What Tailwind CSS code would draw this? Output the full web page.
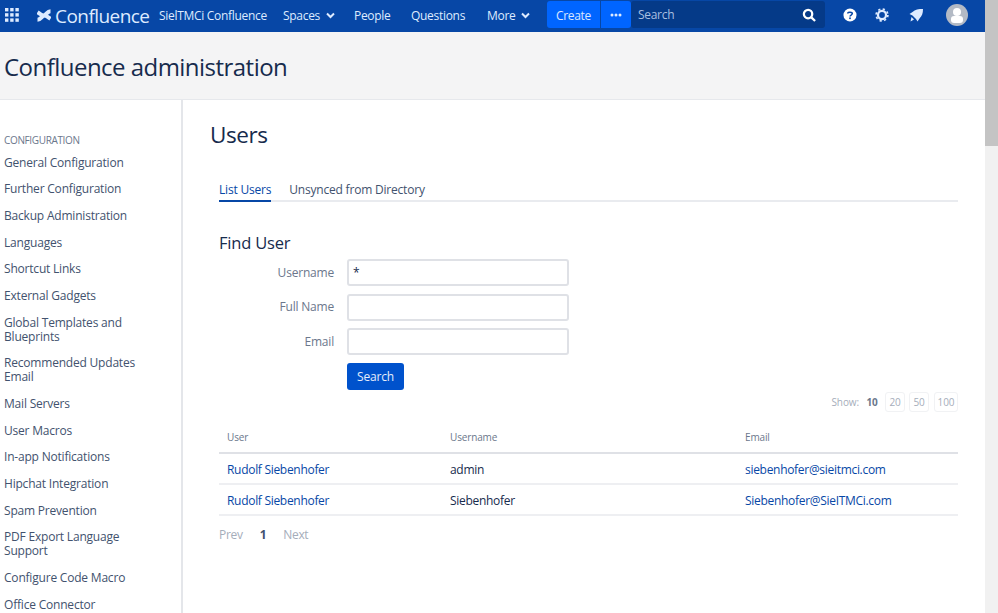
<!DOCTYPE html>
<html><head><meta charset="utf-8"><script src="https://cdn.jsdelivr.net/npm/@tailwindcss/browser@4"></script></head>
<body class="m-0 w-[998px] h-[613px] overflow-hidden bg-white font-['Open_Sans','Noto_Sans',sans-serif] text-[#172b4d] flex">
<div class="w-[985px] h-[613px] flex flex-col shrink-0 overflow-hidden">
<header class="h-8 shrink-0 bg-[#0747a6] flex items-center text-[#deebff] text-[12px] tracking-[-0.3px]">
  <svg class="ml-[5px] -mt-[2px] w-[14px] h-[14px]" viewBox="0 0 14 14" fill="#deebff"><rect x="0" y="0" width="3.4" height="3.4"/><rect x="5.2" y="0" width="3.4" height="3.4"/><rect x="10.4" y="0" width="3.4" height="3.4"/><rect x="0" y="5.2" width="3.4" height="3.4"/><rect x="5.2" y="5.2" width="3.4" height="3.4"/><rect x="10.4" y="5.2" width="3.4" height="3.4"/><rect x="0" y="10.4" width="3.4" height="3.4"/><rect x="5.2" y="10.4" width="3.4" height="3.4"/><rect x="10.4" y="10.4" width="3.4" height="3.4"/></svg>
  <svg class="ml-[18px] -mt-[2px] w-[14px] h-[13px]" viewBox="0 0 14 13" fill="none" stroke="#deebff" stroke-width="4"><path d="M0.500 10.800C4 10.800 5 6.500 7.500 6.500C9.500 6.500 11 8 13.500 9.800"/><path d="M13.500 2.200C10 2.200 9 6.500 6.500 6.500C4.500 6.500 3 5 0.500 3.200"/></svg>
  <span class="ml-[4px] text-[19px] leading-none tracking-[-0.55px] text-[#deebff] w-[95px] whitespace-nowrap">Confluence</span>
  <span class="ml-[9px] w-[124px] whitespace-nowrap">SielTMCi Confluence</span>
  <span class="flex items-center w-[71px]">Spaces<svg class="ml-[6px] -mt-[2px] w-[9px] h-[7px]" viewBox="0 0 9 7" fill="none" stroke="#deebff" stroke-width="2"><path d="M1 1.500L4.500 5L8 1.500"/></svg></span>
  <span class="w-[57px]">People</span>
  <span class="w-[76px]">Questions</span>
  <span class="flex items-center w-[60px]">More<svg class="ml-[6px] -mt-[2px] w-[9px] h-[7px]" viewBox="0 0 9 7" fill="none" stroke="#deebff" stroke-width="2"><path d="M1 1.500L4.500 5L8 1.500"/></svg></span>
  <div class="h-[27px] self-start mt-px flex items-stretch">
    <span class="w-[53px] bg-[#0065ff] rounded-l-[3px] flex items-center justify-center text-white/85 pt-[2px]">Create</span>
    <span class="w-[30px] ml-px bg-[#0065ff] rounded-r-[3px] flex items-center justify-center"><svg class="w-3 h-[4px]" viewBox="0 0 12 4" fill="#deebff"><circle cx="2" cy="2" r="1.500"/><circle cx="6" cy="2" r="1.500"/><circle cx="10" cy="2" r="1.500"/></svg></span>
    <div class="w-[194px] bg-[#053a88] rounded-[3px] flex items-center justify-between pl-[7px] pr-[9px] text-[#a9bfe0]">Search<svg class="w-[14px] h-[14px]" viewBox="0 0 15 15" fill="none" stroke="#fff" stroke-width="2.400"><circle cx="6.500" cy="6.500" r="4.500"/><path d="M10 10L14 14"/></svg></div>
  </div>
  <svg class="ml-[18px] -mt-[2px] w-[14px] h-[14px]" viewBox="0 0 15 15"><circle cx="7.500" cy="7.500" r="7" fill="#fff"/><path d="M5 5.800C5 4 10 4 10 6C10 7.600 7.500 7.500 7.500 9" fill="none" stroke="#0747a6" stroke-width="1.600"/><circle cx="7.500" cy="11" r="1" fill="#0747a6"/></svg>
  <svg class="ml-[18px] -mt-[2px] w-[14px] h-[14px]" viewBox="0 0 15 15" fill="none" stroke="#deebff"><circle cx="7.500" cy="7.500" r="4.300" stroke-width="2.400"/><circle cx="7.500" cy="7.500" r="6.300" stroke-width="1.800" stroke-dasharray="2.400 2.550"/></svg>
  <svg class="ml-[20px] -mt-[2px] w-[14px] h-[13px]" viewBox="0 0 14 13" fill="#deebff"><path d="M14 0C9.500 0 6 0.500 3.500 3L0.500 5L3.500 6.500L7 10L8.500 12.500L10.500 9.500C13 7 14 4.500 14 0Z"/><path d="M2.500 8L5 10.500L1.500 12.500Z"/></svg>
  <div class="ml-[23px] -mt-[2px] w-[22px] h-[22px] rounded-full bg-[#b3bac5] relative overflow-hidden"><span class="absolute left-[7px] top-[4px] w-2 h-2 rounded-full bg-white"></span><span class="absolute left-[5px] top-[12px] w-3 h-[7px] rounded-[3px] bg-white"></span></div>
</header>
<div class="h-[68px] shrink-0 bg-[#f4f4f5] border-b border-[#e6e8ec] flex items-center pl-[4px]">
  <h1 class="text-[24px] leading-none font-normal tracking-[-0.53px] text-[#172b4d] pt-[2px] whitespace-nowrap">Confluence administration</h1>
</div>
<div class="flex flex-1 min-h-0">
  <nav class="w-[183px] shrink-0 border-r-2 border-[#e4e6ea] pl-[4px] pt-[33.500px] pr-[30px] text-[12px] tracking-[-0.2px] leading-[14px] text-[#42526e]">
    <div class="text-[10px] tracking-[-0.35px] text-[#6b778c] mb-[10px] leading-[12px]">CONFIGURATION</div>
    <ul class="flex flex-col gap-[12.7px]">
      <li>General Configuration</li>
      <li>Further Configuration</li>
      <li>Backup Administration</li>
      <li>Languages</li>
      <li>Shortcut Links</li>
      <li>External Gadgets</li>
      <li>Global Templates and Blueprints</li>
      <li>Recommended Updates Email</li>
      <li>Mail Servers</li>
      <li>User Macros</li>
      <li>In-app Notifications</li>
      <li>Hipchat Integration</li>
      <li>Spam Prevention</li>
      <li>PDF Export Language Support</li>
      <li>Configure Code Macro</li>
      <li>Office Connector</li>
    </ul>
  </nav>
  <main class="flex-1 min-w-0 pl-[36px] pr-[27px] pt-[21px]">
    <h2 class="ml-[-9px] text-[22.500px] leading-[28px] font-normal tracking-[-0.4px]">Users</h2>
    <div class="mt-[30px] flex gap-[18px] border-b-2 border-[#e9ebef] text-[12px] tracking-[-0.2px] h-[23px]">
      <span class="text-[#0747a6] border-b-2 border-[#0747a6] h-[23px] leading-[22px]">List Users</span>
      <span class="text-[#42526e] leading-[22px]">Unsynced from Directory</span>
    </div>
    <h3 class="mt-[30px] text-[16.500px] leading-[22px] font-normal tracking-[-0.2px]">Find User</h3>
    <form class="mt-[5px] text-[12px] tracking-[-0.2px] text-[#6b778c] flex flex-col gap-[7.500px]">
      <div class="flex items-center"><label class="w-[115px] text-right">Username</label><div class="ml-[13px] w-[222px] h-[27px] border-2 border-[#dfe1e6] rounded-[3px] px-1 text-[#172b4d] leading-[24px] bg-white">*</div></div>
      <div class="flex items-center"><label class="w-[115px] text-right">Full Name</label><div class="ml-[13px] w-[222px] h-[27px] border-2 border-[#dfe1e6] rounded-[3px] bg-white"></div></div>
      <div class="flex items-center"><label class="w-[115px] text-right">Email</label><div class="ml-[13px] w-[222px] h-[27px] border-2 border-[#dfe1e6] rounded-[3px] bg-white"></div></div>
      <div class="ml-[128px] w-[57px] h-[27px] bg-[#0052cc] rounded-[3px] text-white/90 flex items-center justify-center pt-[2px]">Search</div>
    </form>
    <div class="mt-[2px] flex justify-end items-center text-[10px] tracking-[-0.1px] text-[#a5adba] h-[21px]">
      <span class="mr-[2px]">Show:</span>
      <span class="w-[22px] mr-[2px] text-center font-bold text-[#6b778c]">10</span>
      <span class="w-[20px] h-[20px] mr-[4px] leading-[18px] text-center border border-[#f1f2f4] rounded-[3px]">20</span>
      <span class="w-[20px] h-[20px] mr-[5px] leading-[18px] text-center border border-[#f1f2f4] rounded-[3px]">50</span>
      <span class="w-[24px] h-[20px] leading-[18px] text-center border border-[#f1f2f4] rounded-[3px]">100</span>
    </div>
    <table class="mt-[12px] w-full text-[12px] tracking-[-0.3px] border-collapse table-fixed">
      <thead><tr class="border-b-2 border-[#dfe1e6] h-[28px] text-[10px] tracking-[-0.15px] text-[#6b778c] text-left"><th class="w-[231px] font-normal pl-[8px] pb-[2px]">User</th><th class="w-[295px] font-normal pb-[2px]">Username</th><th class="font-normal pb-[2px]">Email</th></tr></thead>
      <tbody>
        <tr class="h-[31px] border-b-2 border-[#eeeff2]"><td class="pl-[8px] pt-[3px] text-[#0747a6]">Rudolf Siebenhofer</td><td class="pt-[3px] text-[#172b4d]">admin</td><td class="pt-[3px] text-[#0747a6]">siebenhofer@sieitmci.com</td></tr>
        <tr class="h-[31px] border-b-2 border-[#eeeff2]"><td class="pl-[8px] pt-[3px] text-[#0747a6]">Rudolf Siebenhofer</td><td class="pt-[3px] text-[#172b4d]">Siebenhofer</td><td class="pt-[3px] text-[#0747a6]">Siebenhofer@SieITMCi.com</td></tr>
      </tbody>
    </table>
    <div class="mt-[10px] flex gap-[17px] text-[12px] tracking-[-0.3px] text-[#a5adba]"><span>Prev</span><span class="font-bold text-[#42526e]">1</span><span>Next</span></div>
  </main>
</div>
</div>
<div class="w-[13px] h-[613px] bg-[#f1f1f1] shrink-0"><div class="h-[146px] bg-[#c4c4c4]"></div></div>
</body></html>
